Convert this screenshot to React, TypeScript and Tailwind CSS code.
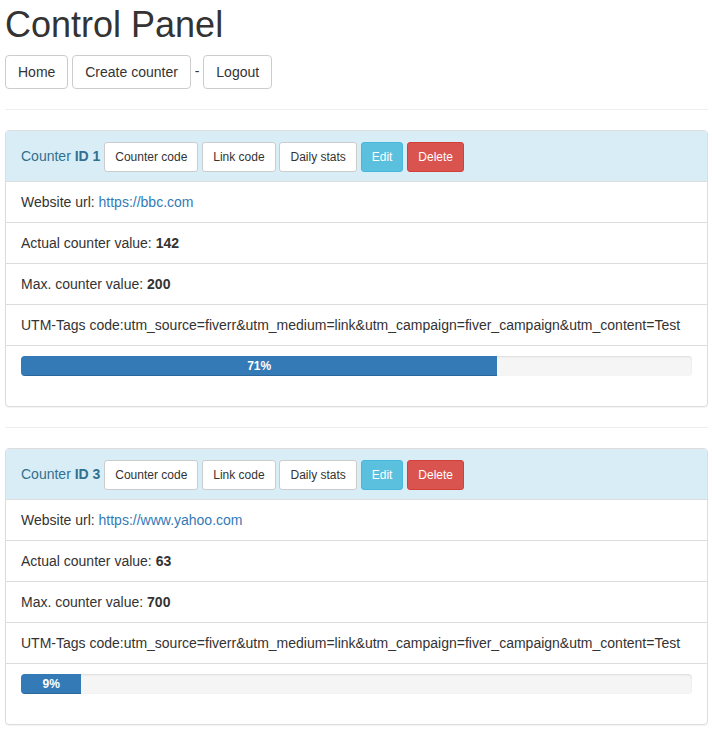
import React from "react";

const counters = [
  { id: 1, url: "https://bbc.com", actual: 142, max: 200, pct: 71 },
  { id: 3, url: "https://www.yahoo.com", actual: 63, max: 700, pct: 9 },
];

const utm =
  "utm_source=fiverr&utm_medium=link&utm_campaign=fiver_campaign&utm_content=Test";

function SmBtn({ children, variant = "default" }: { children: React.ReactNode; variant?: string }) {
  const cls =
    variant === "info"
      ? "bg-[#5bc0de] border-[#46b8da] text-white"
      : variant === "danger"
      ? "bg-[#d9534f] border-[#d43f3a] text-white"
      : "bg-white border-[#ccc] text-[#333]";
  return (
    <span
      className={`inline-block align-middle border rounded-[3px] px-[10px] py-[5px] text-[12px] leading-[18px] ${cls}`}
    >
      {children}
    </span>
  );
}

function Btn({ children }: { children: React.ReactNode }) {
  return (
    <span className="inline-block align-middle border border-[#ccc] bg-white rounded-[4px] px-[12px] py-[6px] text-[14px] leading-[20px] text-[#333]">
      {children}
    </span>
  );
}

export default function App() {
  return (
    <div
      className="pl-[5px] pr-[4px] pt-[5px] text-[14px] leading-[20px] text-[#333] bg-white min-h-screen"
      style={{ fontFamily: '"Liberation Sans", Arial, sans-serif' }}
    >
      <h1 className="text-[36px] leading-[1.1] font-normal mb-[9px] mt-0">Control Panel</h1>
      <div className="h-[35px] leading-[34px]">
        <Btn>Home</Btn> <Btn>Create counter</Btn> - <Btn>Logout</Btn>
      </div>
      {counters.map((c) => (
        <div key={c.id}>
          <hr className="mt-[20px] mb-[20px] border-0 border-t border-[#eee]" />
          <div className="border border-[#ddd] rounded-[4px] bg-white shadow-[0_1px_1px_rgba(0,0,0,0.05)]">
            <div className="bg-[#d9edf7] border-b border-[#ddd] text-[#31708f] px-[15px] py-[10px] rounded-t-[3px] h-[51px] leading-[30px]">
              Counter <b>ID {c.id}</b> <SmBtn>Counter code</SmBtn> <SmBtn>Link code</SmBtn>{" "}
              <SmBtn>Daily stats</SmBtn> <SmBtn variant="info">Edit</SmBtn>{" "}
              <SmBtn variant="danger">Delete</SmBtn>
            </div>
            <div className="px-[15px] py-[10px] border-b border-[#ddd]">
              Website url: <span className="text-[#337ab7]">{c.url}</span>
            </div>
            <div className="px-[15px] py-[10px] border-b border-[#ddd]">
              Actual counter value: <b>{c.actual}</b>
            </div>
            <div className="px-[15px] py-[10px] border-b border-[#ddd]">
              Max. counter value: <b>{c.max}</b>
            </div>
            <div className="px-[15px] py-[10px] border-b border-[#ddd]">UTM-Tags code:{utm}</div>
            <div className="px-[15px] pt-[10px] pb-[10px]">
              <div className="h-[20px] mb-[20px] bg-[#f5f5f5] rounded-[4px] overflow-hidden shadow-[inset_0_1px_2px_rgba(0,0,0,0.1)] flex">
                <div
                  className="h-full bg-[#337ab7] text-white text-[12px] font-bold leading-[20px] text-center shadow-[inset_0_-1px_0_rgba(0,0,0,0.15)]"
                  style={{ width: `${c.pct}%` }}
                >
                  {c.pct}%
                </div>
              </div>
            </div>
          </div>
        </div>
      ))}
      <hr className="mt-[20px] mb-[20px] border-0 border-t border-[#eee]" />
    </div>
  );
}
